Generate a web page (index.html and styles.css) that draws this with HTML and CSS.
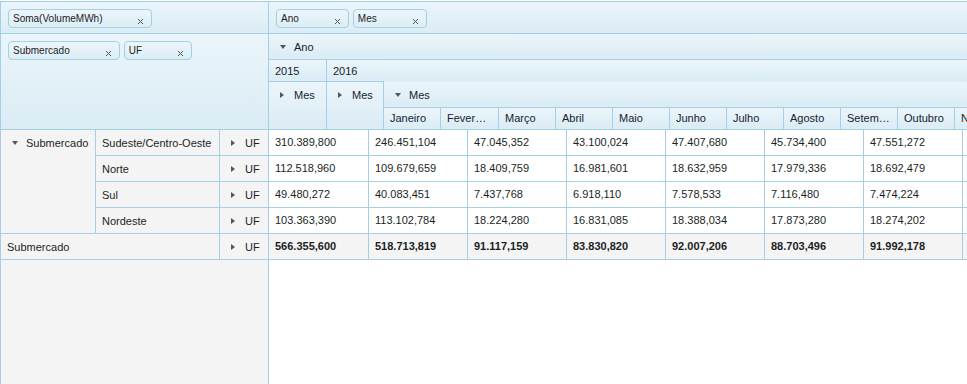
FILE: index.html
```html
<!DOCTYPE html>
<html>
<head>
<meta charset="utf-8">
<title>Pivot</title>
<link rel="stylesheet" href="styles.css">
</head>
<body>
<div class="pivot">
  <div class="left">
    <div class="zone zone-top">
      <span class="chip">Soma(VolumeMWh)<svg class="x" width="7" height="7" viewBox="0 0 7 7"><path d="M1 1L6 6M6 1L1 6"/></svg></span>
    </div>
    <div class="zone zone-fields">
      <span class="chip">Submercado<svg class="x" width="7" height="7" viewBox="0 0 7 7"><path d="M1 1L6 6M6 1L1 6"/></svg></span>
      <span class="chip">UF<svg class="x" width="7" height="7" viewBox="0 0 7 7"><path d="M1 1L6 6M6 1L1 6"/></svg></span>
    </div>
    <div class="rh">
      <div class="c rh-group"><span class="lbl"><svg class="ic" width="16" height="16" viewBox="0 0 16 16"><path d="M5 6h6l-3 4z"/></svg>Submercado</span></div>
      <div class="c rh-mid">Sudeste/Centro-Oeste</div>
      <div class="c rh-last"><svg class="ic" width="16" height="16" viewBox="0 0 16 16"><path d="M5 5v6l4-3z"/></svg>UF</div>
      <div class="c rh-mid">Norte</div>
      <div class="c rh-last"><svg class="ic" width="16" height="16" viewBox="0 0 16 16"><path d="M5 5v6l4-3z"/></svg>UF</div>
      <div class="c rh-mid">Sul</div>
      <div class="c rh-last"><svg class="ic" width="16" height="16" viewBox="0 0 16 16"><path d="M5 5v6l4-3z"/></svg>UF</div>
      <div class="c rh-mid">Nordeste</div>
      <div class="c rh-last"><svg class="ic" width="16" height="16" viewBox="0 0 16 16"><path d="M5 5v6l4-3z"/></svg>UF</div>
      <div class="c rh-total">Submercado</div>
      <div class="c rh-last"><svg class="ic" width="16" height="16" viewBox="0 0 16 16"><path d="M5 5v6l4-3z"/></svg>UF</div>
    </div>
  </div>
  <div class="right">
    <div class="zone zone-top">
      <span class="chip">Ano<svg class="x" width="7" height="7" viewBox="0 0 7 7"><path d="M1 1L6 6M6 1L1 6"/></svg></span>
      <span class="chip">Mes<svg class="x" width="7" height="7" viewBox="0 0 7 7"><path d="M1 1L6 6M6 1L1 6"/></svg></span>
    </div>
    <div class="ch">
      <div class="h h-ano"><svg class="ic" width="16" height="16" viewBox="0 0 16 16"><path d="M5 6h6l-3 4z"/></svg>Ano</div>
      <div class="h h-y2015">2015</div>
      <div class="h h-y2016">2016</div>
      <div class="h h-fill"></div>
      <div class="h h-mes1"><span class="lbl"><svg class="ic" width="16" height="16" viewBox="0 0 16 16"><path d="M5 5v6l4-3z"/></svg>Mes</span></div>
      <div class="h h-mes2"><span class="lbl"><svg class="ic" width="16" height="16" viewBox="0 0 16 16"><path d="M5 5v6l4-3z"/></svg>Mes</span></div>
      <div class="h h-mes3"><svg class="ic" width="16" height="16" viewBox="0 0 16 16"><path d="M5 6h6l-3 4z"/></svg>Mes</div>
      <div class="h h-m">Janeiro</div>
      <div class="h h-m">Fevereiro</div>
      <div class="h h-m">Março</div>
      <div class="h h-m">Abril</div>
      <div class="h h-m">Maio</div>
      <div class="h h-m">Junho</div>
      <div class="h h-m">Julho</div>
      <div class="h h-m">Agosto</div>
      <div class="h h-m">Setembro</div>
      <div class="h h-m">Outubro</div>
      <div class="h h-m">Novembro</div>
      <div class="h h-m">Dezembro</div>
    </div>
    <div class="data">
      <div class="d">310.389,800</div><div class="d">246.451,104</div><div class="d">47.045,352</div><div class="d">43.100,024</div><div class="d">47.407,680</div><div class="d">45.734,400</div><div class="d">47.551,272</div><div class="d"></div>
      <div class="d">112.518,960</div><div class="d">109.679,659</div><div class="d">18.409,759</div><div class="d">16.981,601</div><div class="d">18.632,959</div><div class="d">17.979,336</div><div class="d">18.692,479</div><div class="d"></div>
      <div class="d">49.480,272</div><div class="d">40.083,451</div><div class="d">7.437,768</div><div class="d">6.918,110</div><div class="d">7.578,533</div><div class="d">7.116,480</div><div class="d">7.474,224</div><div class="d"></div>
      <div class="d">103.363,390</div><div class="d">113.102,784</div><div class="d">18.224,280</div><div class="d">16.831,085</div><div class="d">18.388,034</div><div class="d">17.873,280</div><div class="d">18.274,202</div><div class="d"></div>
      <div class="d t">566.355,600</div><div class="d t">518.713,819</div><div class="d t">91.117,159</div><div class="d t">83.830,820</div><div class="d t">92.007,206</div><div class="d t">88.703,496</div><div class="d t">91.992,178</div><div class="d t"></div>
    </div>
  </div>
</div>
</body>
</html>
```

FILE: styles.css
```css
* { box-sizing: border-box; }
html, body { margin: 0; padding: 0; background: #fff; }
body {
  width: 967px;
  height: 384px;
  overflow: hidden;
  font-family: "Liberation Sans", Arial, sans-serif;
  font-size: 11px;
  color: #1b1f24;
}
.pivot {
  display: flex;
  margin-top: 1px;
  height: 383px;
  border-top: 1px solid #a3d0e4;
}
.left {
  flex: 0 0 269px;
  border-left: 1px solid #a3d0e4;
  border-right: 1px solid #a3d0e4;
  background: #f4f4f4;
  display: flex;
  flex-direction: column;
}
.right {
  flex: 1 1 auto;
  min-width: 0;
  overflow: hidden;
  display: flex;
  flex-direction: column;
  background: #fff;
}
.zone {
  background: linear-gradient(#eaf5fa, #dbecf5);
  border-bottom: 1px solid #a3d0e4;
  display: flex;
  align-items: flex-start;
  gap: 4px;
  padding: 7px 0 0 7px;
  flex: 0 0 auto;
}
.zone-top { height: 32px; }
.zone-fields { height: 96px; }
.chip {
  display: inline-flex;
  align-items: center;
  height: 19px;
  padding: 0 7px 0 4px;
  border: 1px solid #a3d0e4;
  border-radius: 4px;
  background: linear-gradient(#ecf6fb, #dcedf5);
  font-size: 10px;
  line-height: 17px;
  color: #222;
  white-space: nowrap;
}
.x {
  margin-left: 35px;
  margin-top: 6px;
  flex: 0 0 auto;
}
.x path { stroke: #555; stroke-width: 1; fill: none; }
.ic { flex: 0 0 16px; margin-right: 3px; }
.ic path { fill: #555; }

/* row headers */
.rh {
  display: grid;
  grid-template-columns: 95px 124px 48px;
  grid-auto-rows: 26px;
}
.c {
  display: flex;
  align-items: center;
  padding-left: 6px;
  border-bottom: 1px solid #a3d0e4;
  background: #f4f4f4;
  white-space: nowrap;
  overflow: hidden;
}
.rh-group {
  grid-row: span 4;
  align-items: flex-start;
  border-right: 1px solid #a3d0e4;
}
.lbl {
  display: flex;
  align-items: center;
  height: 25px;
}
.rh-mid { border-right: 1px solid #a3d0e4; }
.rh-total { grid-column: span 2; border-right: 1px solid #a3d0e4; }

/* column headers */
.ch {
  display: grid;
  grid-template-columns: 58px 57px 57px 58px repeat(10, 57px);
  grid-template-rows: 26px 22px 26px 21px;
  border-bottom: 1px solid #a3d0e4;
  flex: 0 0 auto;
  width: 800px;
}
.h {
  display: flex;
  align-items: center;
  padding: 0 6px;
  background: linear-gradient(#eaf5fa, #dbecf5);
  color: #15222f;
  white-space: nowrap;
  overflow: hidden;
}
.h-ano { grid-column: 1 / -1; grid-row: 1; border-bottom: 1px solid #a3d0e4; }
.h-y2015 { grid-column: 1; grid-row: 2; border-right: 1px solid #a3d0e4; border-bottom: 1px solid #a3d0e4; }
.h-y2016 { grid-column: 2; grid-row: 2; border-bottom: 1px solid #a3d0e4; }
.h-fill { grid-column: 3 / -1; grid-row: 2; }
.h-mes1 { grid-column: 1; grid-row: 3 / 5; align-items: flex-start; border-right: 1px solid #a3d0e4; }
.h-mes2 { grid-column: 2; grid-row: 3 / 5; align-items: flex-start; border-right: 1px solid #a3d0e4; }
.h-mes3 { grid-column: 3 / -1; grid-row: 3; border-bottom: 1px solid #a3d0e4; }
.h-m {
  grid-row: 4;
  display: block;
  line-height: 21px;
  text-overflow: ellipsis;
  border-right: 1px solid #a3d0e4;
}

/* data */
.data {
  display: grid;
  grid-template-columns: 100px repeat(7, 99px);
  grid-auto-rows: 26px;
  width: 793px;
}
.d {
  padding-left: 6px;
  line-height: 25px;
  border-right: 1px solid #a3d0e4;
  border-bottom: 1px solid #a3d0e4;
  white-space: nowrap;
  color: #1b1f24;
}
.d.t { background: #f4f4f4; font-weight: bold; }
```
